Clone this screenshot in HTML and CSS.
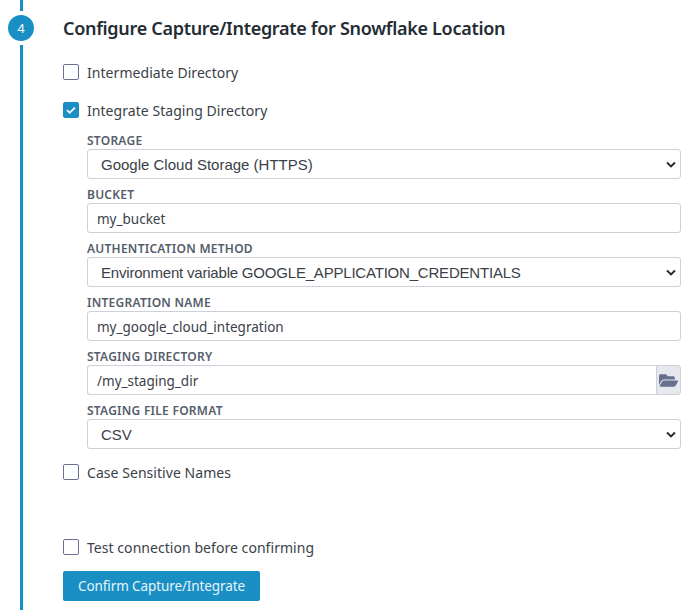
FILE: index.html
```html
<!DOCTYPE html>
<html lang="en">
<head>
    <meta charset="UTF-8">
    <meta name="viewport" content="width=device-width, initial-scale=1.0">
    <title>Configure Capture/Integrate</title>
    <link rel="stylesheet" href="styles.css">
</head>
<body>
    <div class="step">
        <div class="rail">
            <div class="rail-top"></div>
            <div class="step-number">4</div>
            <div class="rail-bottom"></div>
        </div>
        <div class="content">
            <h2>Configure Capture/Integrate for Snowflake Location</h2>

            <label class="check-row first">
                <input type="checkbox">
                <span>Intermediate Directory</span>
            </label>
            <label class="check-row">
                <input type="checkbox" checked>
                <span>Integrate Staging Directory</span>
            </label>

            <div class="fields">
                <div class="field">
                    <label>Storage</label>
                    <select>
                        <option>Google Cloud Storage (HTTPS)</option>
                    </select>
                </div>
                <div class="field">
                    <label>Bucket</label>
                    <input type="text" value="my_bucket">
                </div>
                <div class="field">
                    <label>Authentication Method</label>
                    <select class="long-value">
                        <option>Environment variable GOOGLE_APPLICATION_CREDENTIALS</option>
                    </select>
                </div>
                <div class="field">
                    <label>Integration Name</label>
                    <input type="text" value="my_google_cloud_integration">
                </div>
                <div class="field">
                    <label>Staging Directory</label>
                    <div class="input-group">
                        <input type="text" value="/my_staging_dir">
                        <button class="browse-btn" type="button" aria-label="Browse">
                            <svg viewBox="0 0 576 512" width="19" height="17">
                                <path d="M572.694 292.093L500.27 416.248A63.997 63.997 0 0 1 444.989 448H45.025c-18.523 0-30.064-20.093-20.731-36.093l72.424-124.155A64 64 0 0 1 152 256h399.964c18.523 0 30.064 20.093 20.73 36.093zM152 224h328v-48c0-26.51-21.49-48-48-48H272l-64-64H48C21.49 64 0 85.49 0 112v278.046l69.077-118.418C86.214 242.25 117.989 224 152 224z"/>
                            </svg>
                        </button>
                    </div>
                </div>
                <div class="field">
                    <label>Staging File Format</label>
                    <select>
                        <option>CSV</option>
                    </select>
                </div>
            </div>

            <label class="check-row case-row">
                <input type="checkbox">
                <span>Case Sensitive Names</span>
            </label>
            <label class="check-row test-row">
                <input type="checkbox">
                <span>Test connection before confirming</span>
            </label>

            <button class="confirm-btn" type="button">Confirm Capture/Integrate</button>
        </div>
    </div>
</body>
</html>
```

FILE: styles.css
```css
html, body {
    height: 100%;
}
body {
    margin: 0;
    background-color: #fff;
    color: #3a4149;
    font-family: "Noto Sans", Arial, sans-serif;
    font-size: 14px;
    overflow: hidden;
}
.step {
    display: flex;
    height: 610px;
}
.rail {
    width: 43px;
    margin-right: 20px;
    display: flex;
    flex-direction: column;
    align-items: center;
}
.rail-top, .rail-bottom {
    width: 3px;
    background-color: #1a8fc4;
}
.rail-top {
    height: 11px;
}
.rail-bottom {
    flex: 1;
}
.step-number {
    width: 26px;
    height: 26px;
    margin: 4px 1px 4px 0;
    border-radius: 50%;
    background-color: #1a8fc4;
    color: #fff;
    font-size: 13px;
    font-weight: 400;
    line-height: 26px;
    text-align: center;
}
.content {
    width: 618px;
}
h2 {
    margin: 16px 0 0;
    color: #242c34;
    font-size: 18px;
    font-weight: 600;
    line-height: 24px;
    letter-spacing: -0.3px;
}
.check-row {
    display: flex;
    align-items: center;
    height: 20px;
    margin-top: 18px;
    letter-spacing: 0.05px;
}
.check-row.first {
    margin-top: 22px;
}
.check-row.case-row {
    margin-top: 8px;
}
.check-row.test-row {
    margin-top: 55px;
}
.check-row input {
    appearance: none;
    width: 16px;
    height: 16px;
    margin: 0 8px 0 0;
    border: 1px solid #6b7194;
    border-radius: 2px;
    background-color: #fff;
}
.check-row input:checked {
    border-color: #1a8fc4;
    background: #1a8fc4 url("data:image/svg+xml,%3Csvg xmlns='http://www.w3.org/2000/svg' viewBox='0 0 16 16'%3E%3Cpath d='M3.5 8.2l3 3 6-6' fill='none' stroke='%23fff' stroke-width='2'/%3E%3C/svg%3E") center no-repeat;
}
.fields {
    margin: 10px 0 0 24px;
}
.field {
    height: 54px;
}
.field label {
    display: block;
    height: 19px;
    color: #555e6b;
    font-size: 12px;
    font-weight: 600;
    line-height: 21px;
    letter-spacing: 0.25px;
    text-transform: uppercase;
}
.field input, .field select {
    display: block;
    box-sizing: border-box;
    width: 100%;
    height: 30px;
    border: 1px solid #cdd0d8;
    border-radius: 3px;
    background-color: #fff;
    color: #3a4149;
    outline: none;
}
.field input {
    padding: 1px 9px 0;
    font-family: "Noto Sans", Arial, sans-serif;
    font-size: 13.5px;
}
.field select {
    appearance: none;
    padding: 0 13px;
    font-family: "Liberation Sans", Arial, sans-serif;
    font-size: 15px;
    background-image: url("data:image/svg+xml,%3Csvg xmlns='http://www.w3.org/2000/svg' viewBox='0 0 10 7'%3E%3Cpath d='M1 1.5l4 4 4-4' fill='none' stroke='%23242c34' stroke-width='1.9'/%3E%3C/svg%3E");
    background-repeat: no-repeat;
    background-position: right 4px center;
    background-size: 10px 7px;
}
.field select.long-value {
    letter-spacing: -0.2px;
}
.input-group {
    display: flex;
}
.input-group input {
    flex: 1;
    border-right: none;
    border-radius: 3px 0 0 3px;
}
.browse-btn {
    display: flex;
    align-items: center;
    justify-content: center;
    box-sizing: border-box;
    width: 25px;
    height: 30px;
    padding: 0;
    border: 1px solid #cdd0d8;
    border-radius: 0 3px 3px 0;
    background-color: #e6e8ee;
}
.browse-btn svg {
    fill: #666f8e;
}
.confirm-btn {
    display: block;
    box-sizing: border-box;
    width: 197px;
    height: 30px;
    margin-top: 14px;
    padding: 0;
    border: none;
    border-radius: 2px;
    background-color: #1a8fc4;
    color: #e6f4fb;
    font-family: "Noto Sans", Arial, sans-serif;
    font-size: 13.5px;
    letter-spacing: -0.1px;
}
```
